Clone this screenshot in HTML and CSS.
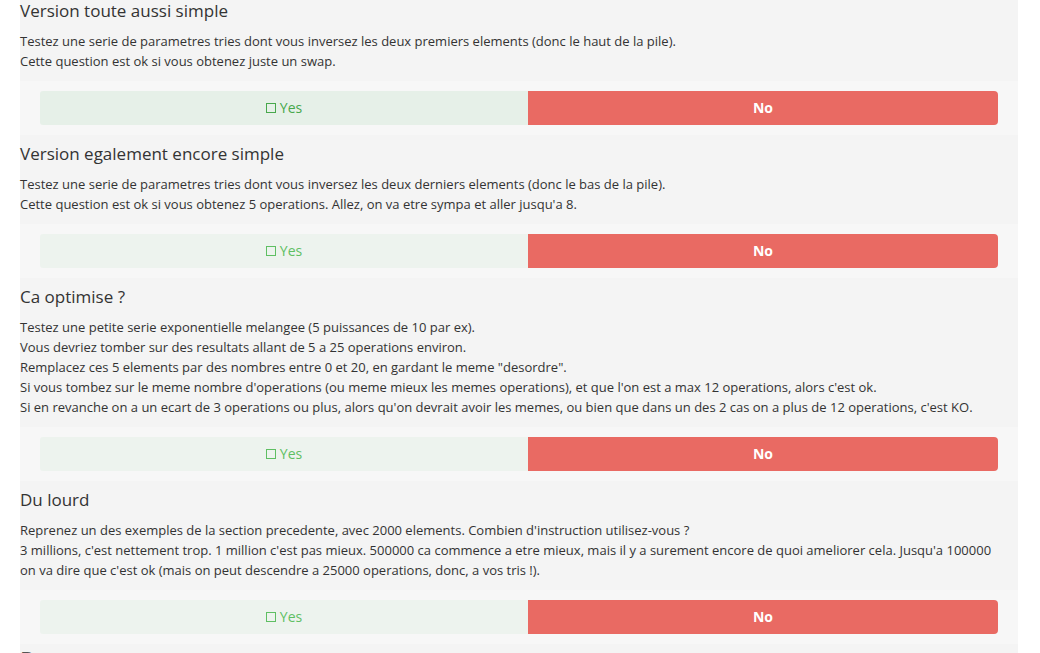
FILE: index.html
```html
<!DOCTYPE html>
<html lang="fr">
<head>
<meta charset="utf-8">
<title>Evaluation</title>
<link rel="stylesheet" href="styles.css">
</head>
<body>
<main class="page">
  <section class="question">
    <h3 class="q-title">Version toute aussi simple</h3>
    <p class="q-text">Testez une serie de parametres tries dont vous inversez les deux premiers elements (donc le haut de la pile).<br>Cette question est ok si vous obtenez juste un swap.</p>
    <div class="answer">
      <button class="btn btn-yes btn-yes-active"><span class="box"></span>Yes</button>
      <button class="btn btn-no">No</button>
    </div>
  </section>
  <section class="question">
    <h3 class="q-title">Version egalement encore simple</h3>
    <p class="q-text">Testez une serie de parametres tries dont vous inversez les deux derniers elements (donc le bas de la pile).<br>Cette question est ok si vous obtenez 5 operations. Allez, on va etre sympa et aller jusqu'a 8.</p>
    <div class="answer">
      <button class="btn btn-yes"><span class="box"></span>Yes</button>
      <button class="btn btn-no">No</button>
    </div>
  </section>
  <section class="question">
    <h3 class="q-title">Ca optimise ?</h3>
    <p class="q-text">Testez une petite serie exponentielle melangee (5 puissances de 10 par ex).<br>Vous devriez tomber sur des resultats allant de 5 a 25 operations environ.<br>Remplacez ces 5 elements par des nombres entre 0 et 20, en gardant le meme "desordre".<br>Si vous tombez sur le meme nombre d'operations (ou meme mieux les memes operations), et que l'on est a max 12 operations, alors c'est ok.<br>Si en revanche on a un ecart de 3 operations ou plus, alors qu'on devrait avoir les memes, ou bien que dans un des 2 cas on a plus de 12 operations, c'est KO.</p>
    <div class="answer">
      <button class="btn btn-yes"><span class="box"></span>Yes</button>
      <button class="btn btn-no">No</button>
    </div>
  </section>
  <section class="question">
    <h3 class="q-title">Du lourd</h3>
    <p class="q-text">Reprenez un des exemples de la section precedente, avec 2000 elements. Combien d'instruction utilisez-vous ?<br>3 millions, c'est nettement trop. 1 million c'est pas mieux. 500000 ca commence a etre mieux, mais il y a surement encore de quoi ameliorer cela. Jusqu'a 100000 on va dire que c'est ok (mais on peut descendre a 25000 operations, donc, a vos tris !).</p>
    <div class="answer">
      <button class="btn btn-yes"><span class="box"></span>Yes</button>
      <button class="btn btn-no">No</button>
    </div>
  </section>
  <h2 class="part-title">Bonus</h2>
</main>
</body>
</html>
```

FILE: styles.css
```css
* { box-sizing: border-box; }
html, body { margin: 0; padding: 0; background: #ffffff; }
body {
  font-family: "Open Sans", "Liberation Sans", sans-serif;
  color: #333333;
  overflow: hidden;
}
.page {
  width: 998px;
  margin: -1px 0 0 20px;
  background: #f4f4f4;
}
.question { display: flex; flex-direction: column; }
.q-title {
  margin: 7px 0 0 0;
  font-size: 17px;
  font-weight: 400;
  line-height: 24px;
  color: #333333;
}
.question:first-child .q-title { margin-top: 0; }
.q-text {
  margin: 8px 0 10px 0;
  padding-right: 12px;
  font-size: 13px;
  line-height: 20px;
  color: #333333;
}
.answer {
  display: grid;
  grid-template-columns: 488fr 470fr;
  padding: 10px 20px;
  background: #f7f7f7;
}
.btn {
  height: 34px;
  border: 0;
  margin: 0;
  padding: 0 0 1px 0;
  font-family: inherit;
  font-size: 14px;
  display: flex;
  align-items: center;
  justify-content: center;
  cursor: pointer;
}
.btn-yes {
  background: #edf3ee;
  color: #5fbf63;
  border-radius: 3px 0 0 3px;
}
.btn-yes-active {
  background: #e6f0e8;
  color: #48a84c;
}
.box {
  display: inline-block;
  width: 10px;
  height: 10px;
  border: 1.5px solid currentColor;
  margin-right: 4px;
}
.btn-no {
  background: #e96a63;
  color: #ffffff;
  font-weight: 700;
  border-radius: 0 4px 4px 0;
}
.part-title {
  margin: 3px 0 0 0;
  font-size: 22px;
  font-weight: 400;
  line-height: 24px;
  color: #555555;
}
```
